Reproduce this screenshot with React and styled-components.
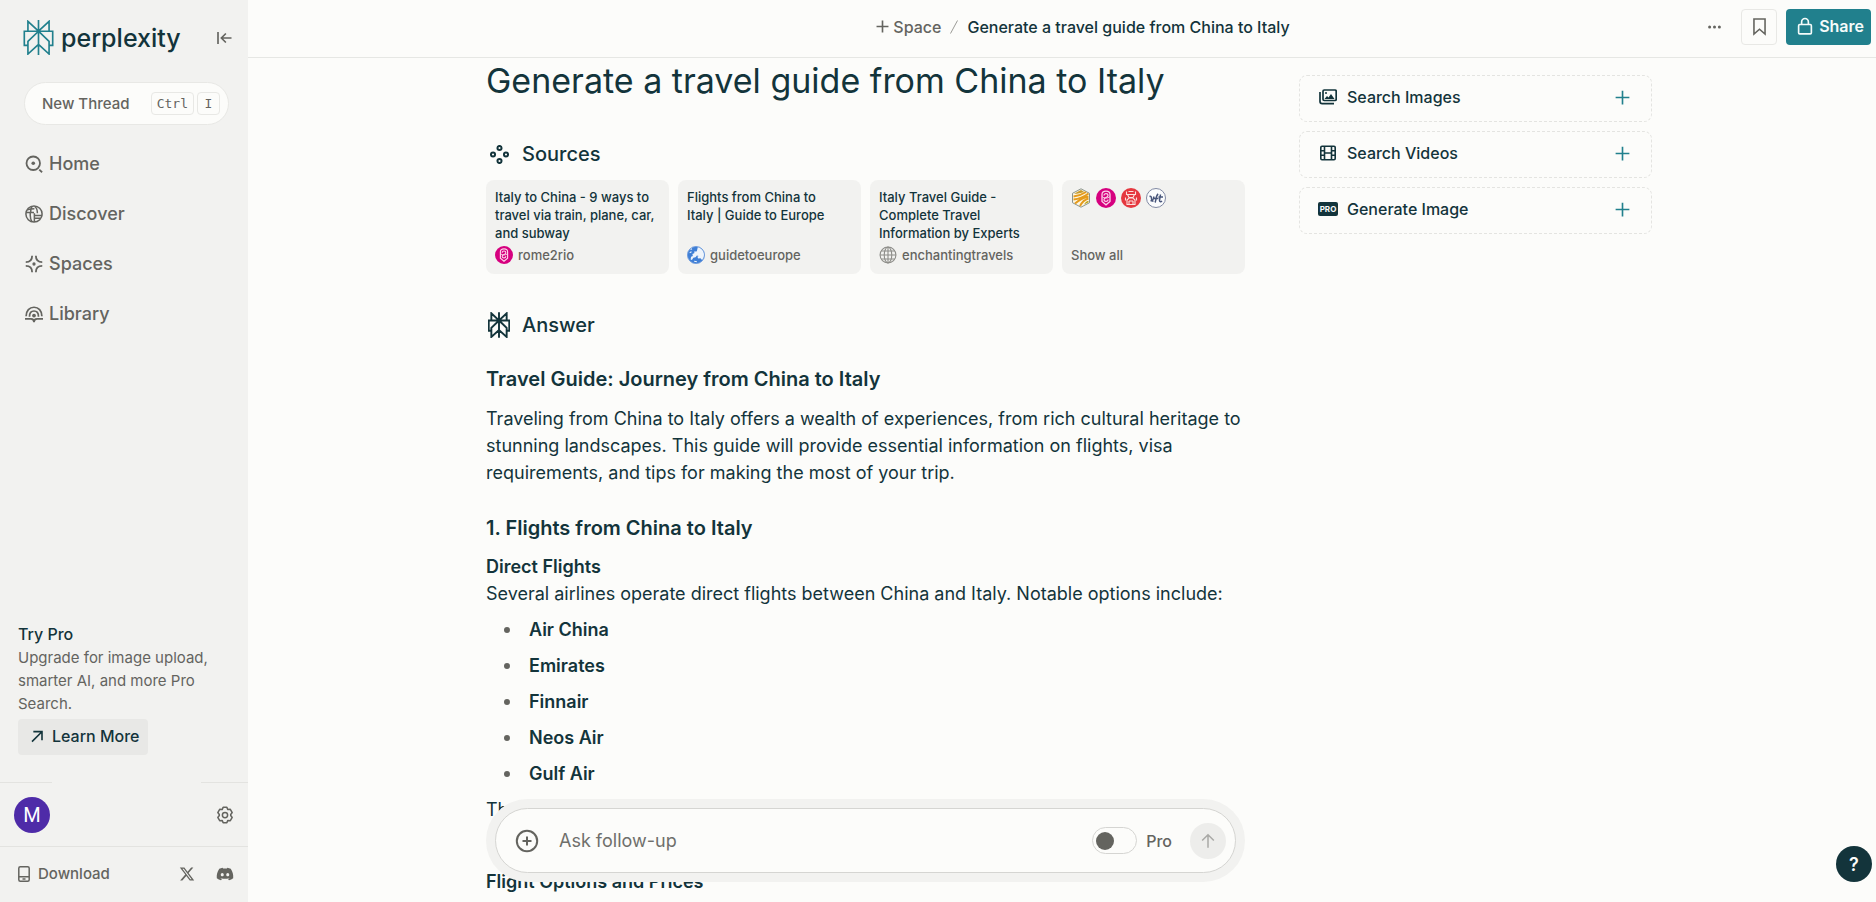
import React from "react";
import styled, { createGlobalStyle, css } from "styled-components";
import { FaDiscord } from "react-icons/fa";
import { FaXTwitter } from "react-icons/fa6";

const GlobalStyle = createGlobalStyle`
  * {
    box-sizing: border-box;
  }

  body {
    margin: 0;
    background-color: #fcfcfa;
    color: #13343b;
    font-family: Inter, "Liberation Sans", sans-serif;
    font-size: 16px;
  }

  button, input {
    font-family: inherit;
    color: inherit;
  }

  a {
    color: inherit;
    text-decoration: none;
  }

  svg {
    display: block;
    flex-shrink: 0;
  }
`;

const Page = styled.div`
  display: flex;
  height: 100vh;
  overflow: hidden;
`;

/* sidebar */

const Sidebar = styled.aside`
  display: flex;
  flex-direction: column;
  flex-shrink: 0;
  width: 248px;
  background-color: #f2f2f0;
  color: #64645f;
`;

const SidebarTop = styled.div`
  display: flex;
  align-items: center;
  justify-content: space-between;
  padding: 20px 15px 0 23px;
`;

const Logo = styled.a`
  display: flex;
  align-items: center;
  gap: 7px;
`;

const Wordmark = styled.span`
  color: #13343b;
  font-size: 25px;
  font-weight: 500;
  line-height: 32px;
`;

const IconButton = styled.button`
  display: flex;
  align-items: center;
  justify-content: center;
  border: none;
  background: none;
  padding: 0;
  color: #64645f;
  cursor: pointer;
`;

const NewThread = styled.button`
  display: flex;
  align-items: center;
  justify-content: space-between;
  height: 43px;
  margin: 27px 19px 0 24px;
  padding: 0 8px 0 17px;
  border: 1px solid #e8e8e5;
  border-radius: 22px;
  background-color: #fcfcfa;
  color: #64645f;
  font-size: 15px;
  font-weight: 500;
  cursor: pointer;
`;

const Keys = styled.span`
  display: flex;
  gap: 3px;
`;

const Key = styled.kbd`
  min-width: 23px;
  padding: 0 5px;
  border: 1px solid #e8e8e5;
  border-radius: 4px;
  font-family: "DejaVu Sans Mono", monospace;
  font-size: 13px;
  font-weight: 400;
  line-height: 21px;
  text-align: center;
`;

const Nav = styled.nav`
  display: flex;
  flex-direction: column;
  gap: 20px;
  padding: 24px 25px;
`;

const NavItem = styled.a`
  display: flex;
  align-items: center;
  gap: 6px;
  font-size: 18px;
  font-weight: 500;
  line-height: 30px;
`;

const TryPro = styled.section`
  margin-top: auto;
  padding: 0 18px 27px;
`;

const TryProTitle = styled.h2`
  margin: 0;
  color: #13343b;
  font-size: 16px;
  font-weight: 500;
  line-height: 24px;
`;

const TryProText = styled.p`
  margin: 0 0 4px;
  font-size: 15px;
  line-height: 23px;
`;

const LearnMore = styled.button`
  display: flex;
  align-items: center;
  gap: 7px;
  height: 36px;
  padding: 0 8px 2px 11px;
  border: none;
  border-radius: 4px;
  background-color: #e8e8e6;
  color: #13343b;
  font-size: 16px;
  font-weight: 500;
  cursor: pointer;
`;

const SplitLine = styled.div`
  display: flex;
  justify-content: space-between;

  &::before,
  &::after {
    content: "";
    width: 52px;
    border-top: 1px solid #e3e3e0;
  }

  &::after {
    width: 47px;
  }
`;

const Account = styled.div`
  display: flex;
  align-items: center;
  justify-content: space-between;
  height: 63px;
  padding: 0 14px;
`;

const Avatar = styled.span`
  width: 36px;
  height: 36px;
  border-radius: 50%;
  background-color: #4e2ba8;
  color: #fff;
  font-family: Roboto, sans-serif;
  font-size: 20px;
  line-height: 36px;
  text-align: center;
`;

const DownloadRow = styled.div`
  display: flex;
  align-items: center;
  justify-content: space-between;
  height: 56px;
  padding: 0 14px 2px 18px;
  border-top: 1px solid #e3e3e0;
`;

const Download = styled.a`
  display: flex;
  align-items: center;
  gap: 8px;
  font-size: 15px;
  font-weight: 500;
`;

const Socials = styled.div`
  display: flex;
  align-items: center;
  gap: 21px;
`;

/* main column */

const Main = styled.main`
  position: relative;
  display: flex;
  flex: 1;
  flex-direction: column;
  min-width: 0;
`;

const Header = styled.header`
  display: grid;
  grid-template-columns: 1fr auto 1fr;
  align-items: center;
  flex-shrink: 0;
  height: 58px;
  padding: 0 5px 4px 47px;
  border-bottom: 1px solid #e6e7e4;
`;

const Breadcrumb = styled.div`
  display: flex;
  grid-column: 2;
  align-items: center;
  gap: 9px;
  font-size: 16px;
  font-weight: 500;
  line-height: 20px;
`;

const SpaceButton = styled.button`
  display: flex;
  align-items: center;
  gap: 4px;
  border: none;
  background: none;
  padding: 0;
  color: #64645f;
  font-size: 16px;
  font-weight: 500;
  cursor: pointer;
`;

const Actions = styled.div`
  display: flex;
  align-items: center;
  justify-content: flex-end;
  gap: 9px;
`;

const SquareButton = styled(IconButton)`
  width: 36px;
  height: 36px;
  border: 1px solid ${(props) => (props.$outlined ? "#e8e8e5" : "transparent")};
  border-radius: 4px;
`;

const Share = styled.button`
  display: flex;
  align-items: center;
  gap: 5px;
  height: 36px;
  padding: 0 7px 1px 10px;
  border: none;
  border-radius: 4px;
  background-color: #21808d;
  color: #f4fbfa;
  font-size: 16px;
  font-weight: 600;
  cursor: pointer;
`;

const Scroller = styled.div`
  flex: 1;
  min-height: 0;
  overflow: hidden;
`;

const columns = css`
  display: grid;
  grid-template-columns: minmax(0, 759px) minmax(0, 353px);
  justify-content: center;
  gap: 54px;
  padding-left: 14px;
`;

const Columns = styled.div`
  ${columns}
`;

const Article = styled.article`
  min-width: 0;
`;

const Title = styled.h1`
  margin: 3px 0 0;
  font-size: 34px;
  font-weight: 400;
  line-height: 40px;
`;

const SectionTitle = styled.h2`
  display: flex;
  align-items: center;
  gap: 10px;
  margin: ${(props) => props.$top}px 0 0;
  font-size: 20px;
  font-weight: 500;
  line-height: 28px;
`;

const IconSlot = styled.span`
  display: flex;
  flex-shrink: 0;
  justify-content: center;
  width: ${(props) => props.$width}px;
`;

const Sources = styled.div`
  display: grid;
  grid-template-columns: repeat(4, 1fr);
  gap: 9px;
  margin-top: 12px;
`;

const SourceCard = styled.a`
  display: flex;
  flex-direction: column;
  justify-content: space-between;
  height: 94px;
  padding: 8px 9px 10px;
  border-radius: 8px;
  background-color: #f2f2f0;
  font-size: 13px;
  font-weight: 500;
  line-height: 18px;
`;

const SourceSite = styled.span`
  display: flex;
  align-items: center;
  gap: 5px;
  color: #64645f;
`;

const Favicons = styled.span`
  display: flex;
  gap: 5px;
`;

const Heading = styled.h2`
  margin: ${(props) => props.$top}px 0 0;
  font-size: 20px;
  font-weight: 600;
  line-height: 28px;
`;

const Paragraph = styled.p`
  margin: ${(props) => props.$top}px 0 0;
  font-size: 18px;
  line-height: 27px;
`;

const SubHeading = styled.h3`
  margin: ${(props) => props.$top}px 0 0;
  font-size: 18px;
  font-weight: 600;
  line-height: 27px;
`;

const Airlines = styled.ul`
  display: flex;
  flex-direction: column;
  gap: 9px;
  margin: 9px 0;
  padding-left: 18px;
  list-style: none;
  font-size: 18px;
  font-weight: 600;
  line-height: 27px;
`;

const Airline = styled.li`
  display: flex;
  align-items: center;
  gap: 19px;

  &::before {
    content: "";
    width: 6px;
    height: 6px;
    border-radius: 50%;
    background-color: #64645f;
  }
`;

const Tools = styled.aside`
  display: flex;
  flex-direction: column;
  gap: 9px;
  padding-top: 17px;
`;

const ToolButton = styled.button`
  display: flex;
  align-items: center;
  gap: 9px;
  height: 47px;
  padding: 0 21px 3px 18px;
  border: 1px dashed #e4e4e1;
  border-radius: 8px;
  background: none;
  font-size: 16px;
  font-weight: 500;
  cursor: pointer;

  & > svg {
    margin-left: auto;
    color: #21808d;
  }
`;

const ProTag = styled.span`
  width: 20px;
  border-radius: 2px;
  background-color: #13343b;
  color: #fcfcfa;
  font-size: 8px;
  font-weight: 700;
  line-height: 14px;
  text-align: center;
`;

/* the follow-up bar floats over the answer */

const FollowUp = styled.div`
  ${columns}
  position: absolute;
  right: 0;
  bottom: 20px;
  left: 0;
`;

const FollowUpRing = styled.div`
  padding: 9px;
  border-radius: 42px;
  background-color: #f2f2f0;
`;

const FollowUpForm = styled.form`
  display: flex;
  align-items: center;
  height: 65px;
  padding: 0 9px 0 19px;
  border: 1px solid #d5d5d2;
  border-radius: 33px;
  background-color: #fcfcfa;
`;

const FollowUpInput = styled.input`
  flex: 1;
  min-width: 0;
  margin-left: 20px;
  padding: 0;
  border: none;
  outline: none;
  background: none;
  font-size: 18px;
  line-height: 27px;

  &::placeholder {
    color: #6f6f6b;
    opacity: 1;
  }
`;

const ProLabel = styled.label`
  display: flex;
  align-items: center;
  gap: 9px;
  margin-right: 18px;
  color: #64645f;
  font-size: 16px;
  font-weight: 500;
`;

const ProToggle = styled.input`
  appearance: none;
  display: flex;
  align-items: center;
  width: 45px;
  height: 27px;
  margin: 0;
  padding: 0 3px;
  border: 1px solid #d5d5d2;
  border-radius: 14px;

  &::before {
    content: "";
    width: 18px;
    height: 18px;
    border-radius: 50%;
    background-color: #64645f;
  }

  &:checked {
    justify-content: flex-end;
  }
`;

const Send = styled(IconButton)`
  width: 36px;
  height: 36px;
  border-radius: 50%;
  background-color: #ededeb;
  color: #a9a9a6;
`;

const Help = styled.button`
  position: fixed;
  right: 4px;
  bottom: 20px;
  width: 36px;
  height: 36px;
  padding: 0;
  border: none;
  border-radius: 50%;
  background-color: #13343b;
  color: #fcfcfa;
  font-size: 18px;
  font-weight: 600;
  cursor: pointer;
`;

/* icons */

function Icon({ size = 18, width = 2, children }) {
  return (
    <svg
      width={size}
      height={size}
      viewBox="0 0 24 24"
      fill="none"
      stroke="currentColor"
      strokeWidth={width}
      aria-hidden="true"
    >
      {children}
    </svg>
  );
}

function Mark({ width, height, color, stroke }) {
  return (
    <svg width={width} height={height} viewBox="0 0 92 106" fill="none" stroke={color} strokeWidth={stroke} aria-hidden="true">
      <path d="M46 0v106M14 34V4l32 30L78 4v30M14 77H3V34h86v43H78M46 34 14 65v38l32-29 32 29V65L46 34z" />
    </svg>
  );
}

const HomeIcon = () => (
  <Icon width={2.4}>
    <circle cx="11" cy="11" r="9" />
    <circle cx="11" cy="11" r="2.4" fill="currentColor" stroke="none" />
    <path d="m19 19.500 3.800 3.500" />
  </Icon>
);

const DiscoverIcon = () => (
  <Icon>
    <circle cx="12" cy="12" r="10.800" />
    <path d="M1.500 10h10.500M3 6.500c4-1.500 8.500-1.500 9.500-1.500M9.500 1.500C7.500 4.500 7.500 7.500 7.500 10M13 2c3 2 3.500 6 3.500 9M12 14h11M12 17.500h9M7 10v4c0 4 1 6.500 2.500 8.500M12.500 11v11.500" />
  </Icon>
);

const SpacesIcon = () => (
  <Icon width={2.4}>
    <path d="M9.500 1c0 5-3 8.500-8.500 8.500M14.500 1c0 5 3 8.500 8.500 8.500M9.500 23c0-5-3-8.500-8.500-8.500M14.500 23c0-5 3-8.500 8.500-8.500" />
    <circle cx="12" cy="12" r="2.200" fill="currentColor" stroke="none" />
  </Icon>
);

const LibraryIcon = () => (
  <Icon width={2.3}>
    <path d="M1.500 15C1.500 7.500 6 3 12 3s10.500 4.500 10.500 12M6 15.500c0-5 2.500-7.500 6-7.500s6 2.500 6 7.500M0 18.500h8c2.500 0 4 1.500 4 4.500 0-3 1.500-4.500 4-4.500h8" />
    <circle cx="12" cy="14" r="2.500" fill="currentColor" stroke="none" />
  </Icon>
);

const CollapseIcon = () => (
  <Icon width={2.2}>
    <path d="M4 4v16M22 12H9M14.500 6 8.500 12l6 6" />
  </Icon>
);

const PlusIcon = ({ size, width }) => (
  <Icon size={size} width={width}>
    <path d="M12 1v22M1 12h22" />
  </Icon>
);

const ArrowUpRightIcon = () => (
  <Icon size={16} width={2.4}>
    <path d="M4.500 20.500 19 6M6.500 5.500H19.500V18.500" />
  </Icon>
);

const GearIcon = () => (
  <Icon>
    <circle cx="12" cy="12" r="3.500" />
    <path
      strokeLinejoin="round"
      d="M9.500 1.800h5l1.300 3 3.300-.4 2.500 4.300-2 2.600v1.400l2 2.600-2.500 4.300-3.300-.4-1.300 3h-5l-1.300-3-3.300.4-2.500-4.300 2-2.600v-1.400l-2-2.600 2.500-4.300 3.300.4z"
    />
  </Icon>
);

const PhoneIcon = () => (
  <svg width="12" height="16" viewBox="0 0 12 16" fill="none" stroke="currentColor" strokeWidth="1.500" aria-hidden="true">
    <rect x="0.800" y="0.800" width="10.400" height="14.400" rx="1.500" />
    <path d="M1 10.800h10M4.500 13h3" />
  </svg>
);

const DotsIcon = () => (
  <svg width="13" height="4" viewBox="0 0 13 4" fill="currentColor" aria-hidden="true">
    <circle cx="1.600" cy="2" r="1.500" />
    <circle cx="6.500" cy="2" r="1.500" />
    <circle cx="11.400" cy="2" r="1.500" />
  </svg>
);

const BookmarkIcon = () => (
  <Icon size={19}>
    <path d="M5 2.500h14v19l-7-6-7 6z" />
  </Icon>
);

const LockIcon = () => (
  <Icon size={18} width={2.2}>
    <rect x="3.500" y="10" width="17" height="12.500" rx="1.500" />
    <path d="M7.500 10V6.500a4.500 4.500 0 0 1 9 0V10" />
  </Icon>
);

const SlashIcon = () => (
  <svg width="8" height="14" viewBox="0 0 8 14" fill="none" stroke="#9a9a96" aria-hidden="true">
    <path d="M7.500.5l-7 13" />
  </svg>
);

const SourcesIcon = () => (
  <Icon size={19} width={2.5}>
    <circle cx="12" cy="3.800" r="2.600" />
    <circle cx="12" cy="20.200" r="2.600" />
    <circle cx="3.800" cy="12" r="2.600" />
    <circle cx="20.200" cy="12" r="2.600" />
  </Icon>
);

const ImagesIcon = () => (
  <svg width="18" height="16" viewBox="0 0 18 16" fill="none" stroke="currentColor" strokeWidth="1.700" aria-hidden="true">
    <rect x="4" y="1" width="13.200" height="10.500" rx="1.200" />
    <path d="M1 3v9.500c0 1.500.8 2.200 2.200 2.200H15" />
    <path d="m5.500 10 2.500-3 1.500 1.500L12 5l3.500 5z" fill="currentColor" stroke="none" />
    <circle cx="7" cy="4" r="1" fill="currentColor" stroke="none" />
  </svg>
);

const VideosIcon = () => (
  <svg width="18" height="16" viewBox="0 0 18 16" fill="none" stroke="currentColor" strokeWidth="1.600" aria-hidden="true">
    <rect x="1.800" y="1.300" width="14.400" height="13.400" rx="1.200" />
    <path d="M5.500 1.500v13M12.500 1.500v13M5.500 8h7M2 5.800h3.500M2 10.200h3.500M12.500 5.800H16M12.500 10.200H16" />
  </svg>
);

const AttachIcon = () => (
  <Icon size={24}>
    <circle cx="12" cy="12" r="10.200" />
    <path d="M12 7.500v9M7.500 12h9" />
  </Icon>
);

const ArrowUpIcon = () => (
  <Icon size={20} width={1.8}>
    <path d="M12 20V5M5 11.500 12 4.500l7 7" />
  </Icon>
);

/* favicons */

function RomeIcon({ size = 18 }) {
  return (
    <svg width={size} height={size} viewBox="0 0 20 20" fill="none" aria-hidden="true">
      <circle cx="10" cy="10" r="10" fill="#d6007f" />
      <path d="M6 6.500C6 4.500 7.500 3.200 10 3.200s4 1.300 4 3.300v7L10 16.800 6 13.500z" stroke="#fbd3e8" strokeWidth="1.300" />
      <path d="M8 7.500c0-2.500 4-2.500 4 0S8 9 8 11.500s4 2.500 4 0" stroke="#fbd3e8" strokeWidth="1.200" />
      <path d="M6 8.500c2 2 6 2 8 0" stroke="#fbd3e8" />
    </svg>
  );
}

const EuropeIcon = () => (
  <svg width="18" height="18" viewBox="0 0 20 20" aria-hidden="true">
    <circle cx="10" cy="10" r="9.500" fill="#3f7fd6" stroke="#6e9bdc" />
    <path
      fill="#eef4fb"
      d="M12 1.500c3 .5 6 3 6.700 6.500.5 3-.2 5.500-2 7.500l-1.700-2-2.500.5-1-2 1.500-1-2-.5-1.500 2-2.500.5-1.500 2.500-1.500-.5.500-3 2-1-.5-2 2-1 .5-2.500 1.500 1 1-1z"
    />
    <path d="M4 4l1.500-1M3 7.500l2-1M8 17l3 .500" stroke="#eef4fb" strokeWidth="1.200" />
  </svg>
);

const GlobeIcon = () => (
  <svg width="18" height="18" viewBox="0 0 20 20" fill="none" stroke="#8c8c88" strokeWidth="1.200" aria-hidden="true">
    <circle cx="10" cy="10" r="8.800" />
    <ellipse cx="10" cy="10" rx="4.200" ry="8.800" />
    <path d="M10 1v18M1 10h18M2.500 5.500h15M2.500 14.500h15" />
  </svg>
);

const HexIcon = () => (
  <svg width="20" height="20" viewBox="0 0 20 20" fill="none" aria-hidden="true">
    <path d="M10 .8 18.500 5.300v9.400L10 19.200l-8.500-4.500V5.300z" fill="#fdf7e6" stroke="#8a938c" />
    <path d="M2.500 8.500C7 8 12 6 15 4M2.500 11.500c6-.5 11-3 15-6M4 15.500C8 12 13 9.500 17.500 8.500M9 18c2-4 5-6.500 8.500-7.500" stroke="#e59b1c" strokeWidth="1.900" />
    <path d="M3 5.800 10 2l3 1.700C9 5.300 6 6 3 5.800z" fill="#c79a2b" />
    <path d="M13 16.500c1-2 2.500-3 4.500-3.700v1.400z" fill="#b9a012" />
  </svg>
);

const RedIcon = () => (
  <svg width="20" height="20" viewBox="0 0 20 20" fill="none" aria-hidden="true">
    <circle cx="10" cy="10" r="10" fill="#e5383f" />
    <path
      d="M5.500 3.500v3h9v-3M7.500 3.500h5M6.500 6.500 8 9.500h4l1.500-3M6 16.500v-4.500l2-2h4l2 2v4.500zM8 13h4M8 16v-3M12 16v-3M4.500 9.500v3M15.500 9.500v3"
      stroke="#fce0dd"
      strokeWidth="1.100"
    />
  </svg>
);

const VftIcon = () => (
  <svg width="20" height="20" viewBox="0 0 20 20" fill="none" aria-hidden="true">
    <circle cx="10" cy="10" r="9.500" fill="#fbfcfd" stroke="#8089a3" />
    <path
      d="M3.500 8.500c1.500-.5 2 .5 2 2s1 2 1.800.5L8 8.500M9 14.500c1.500-2 .5-7 3.200-8.500M8 10.500h4.500M14.500 6.500l-1 6c0 1.500 1.500 1.500 2.500.5M12.500 9H17M4.500 12.500l3 .800"
      stroke="#47557a"
      strokeWidth="1.500"
    />
  </svg>
);

const navItems = [
  { label: "Home", icon: <HomeIcon /> },
  { label: "Discover", icon: <DiscoverIcon /> },
  { label: "Spaces", icon: <SpacesIcon /> },
  { label: "Library", icon: <LibraryIcon /> },
];

const sources = [
  { title: "Italy to China - 9 ways to travel via train, plane, car, and subway", site: "rome2rio", icon: <RomeIcon /> },
  { title: "Flights from China to Italy\u00a0| Guide to Europe", site: "guidetoeurope", icon: <EuropeIcon /> },
  { title: "Italy Travel Guide - Complete Travel Information by Experts", site: "enchantingtravels", icon: <GlobeIcon /> },
];

const airlines = ["Air China", "Emirates", "Finnair", "Neos Air", "Gulf Air"];

const tools = [
  { label: "Search Images", icon: <ImagesIcon /> },
  { label: "Search Videos", icon: <VideosIcon /> },
  { label: "Generate Image", icon: <ProTag>PRO</ProTag> },
];

function SideMenu() {
  return (
    <Sidebar>
      <SidebarTop>
        <Logo href="#">
          <Mark width={31} height={35} color="#21808d" stroke={5} />
          <Wordmark>perplexity</Wordmark>
        </Logo>
        <IconButton aria-label="Collapse sidebar">
          <CollapseIcon />
        </IconButton>
      </SidebarTop>

      <NewThread>
        New Thread
        <Keys>
          <Key>Ctrl</Key>
          <Key>I</Key>
        </Keys>
      </NewThread>

      <Nav>
        {navItems.map((item) => (
          <NavItem href="#" key={item.label}>
            {item.icon}
            {item.label}
          </NavItem>
        ))}
      </Nav>

      <TryPro>
        <TryProTitle>Try Pro</TryProTitle>
        <TryProText>Upgrade for image upload, smarter AI, and more Pro Search.</TryProText>
        <LearnMore>
          <ArrowUpRightIcon />
          Learn More
        </LearnMore>
      </TryPro>

      <SplitLine />
      <Account>
        <Avatar>M</Avatar>
        <IconButton aria-label="Settings">
          <GearIcon />
        </IconButton>
      </Account>

      <DownloadRow>
        <Download href="#">
          <PhoneIcon />
          Download
        </Download>
        <Socials>
          <a href="#" aria-label="X">
            <FaXTwitter size={16} />
          </a>
          <a href="#" aria-label="Discord">
            <FaDiscord size={18} />
          </a>
        </Socials>
      </DownloadRow>
    </Sidebar>
  );
}

function TopBar() {
  return (
    <Header>
      <Breadcrumb>
        <SpaceButton>
          <PlusIcon size={13} width={3} />
          Space
        </SpaceButton>
        <SlashIcon />
        <span>Generate a travel guide from China to Italy</span>
      </Breadcrumb>
      <Actions>
        <SquareButton aria-label="More">
          <DotsIcon />
        </SquareButton>
        <SquareButton $outlined aria-label="Bookmark">
          <BookmarkIcon />
        </SquareButton>
        <Share>
          <LockIcon />
          Share
        </Share>
      </Actions>
    </Header>
  );
}

export default function App() {
  return (
    <Page>
      <GlobalStyle />
      <SideMenu />
      <Main>
        <TopBar />
        <Scroller>
          <Columns>
            <Article>
              <Title>Generate a travel guide from China to Italy</Title>

              <SectionTitle $top={39}>
                <IconSlot $width={26}>
                  <SourcesIcon />
                </IconSlot>
                Sources
              </SectionTitle>
              <Sources>
                {sources.map((source) => (
                  <SourceCard href="#" key={source.site}>
                    <span>{source.title}</span>
                    <SourceSite>
                      {source.icon}
                      {source.site}
                    </SourceSite>
                  </SourceCard>
                ))}
                <SourceCard href="#">
                  <Favicons>
                    <HexIcon />
                    <RomeIcon size={20} />
                    <RedIcon />
                    <VftIcon />
                  </Favicons>
                  <SourceSite>Show all</SourceSite>
                </SourceCard>
              </Sources>

              <SectionTitle $top={37}>
                <IconSlot $width={26}>
                  <Mark width={22} height={26} color="#13343b" stroke={8} />
                </IconSlot>
                Answer
              </SectionTitle>

              <Heading $top={26}>Travel Guide: Journey from China to Italy</Heading>
              <Paragraph $top={12}>
                Traveling from China to Italy offers a wealth of experiences, from rich cultural heritage to stunning
                landscapes. This guide will provide essential information on flights, visa requirements, and tips for
                making the most of your trip.
              </Paragraph>

              <Heading $top={28}>1. Flights from China to Italy</Heading>
              <SubHeading $top={11}>Direct Flights</SubHeading>
              <Paragraph $top={0}>
                Several airlines operate direct flights between China and Italy. Notable options include:
              </Paragraph>
              <Airlines>
                {airlines.map((name) => (
                  <Airline key={name}>{name}</Airline>
                ))}
              </Airlines>
              <Paragraph $top={0}>These flights</Paragraph>
              <SubHeading $top={45}>Flight Options and Prices</SubHeading>
            </Article>

            <Tools>
              {tools.map((tool) => (
                <ToolButton key={tool.label}>
                  <IconSlot $width={20}>{tool.icon}</IconSlot>
                  {tool.label}
                  <PlusIcon size={15} width={2.6} />
                </ToolButton>
              ))}
            </Tools>
          </Columns>
        </Scroller>

        <FollowUp>
          <FollowUpRing>
            <FollowUpForm>
              <IconButton type="button" aria-label="Attach">
                <AttachIcon />
              </IconButton>
              <FollowUpInput placeholder="Ask follow-up" aria-label="Ask follow-up" />
              <ProLabel>
                <ProToggle type="checkbox" />
                Pro
              </ProLabel>
              <Send type="button" aria-label="Send">
                <ArrowUpIcon />
              </Send>
            </FollowUpForm>
          </FollowUpRing>
        </FollowUp>
      </Main>
      <Help aria-label="Help">?</Help>
    </Page>
  );
}
